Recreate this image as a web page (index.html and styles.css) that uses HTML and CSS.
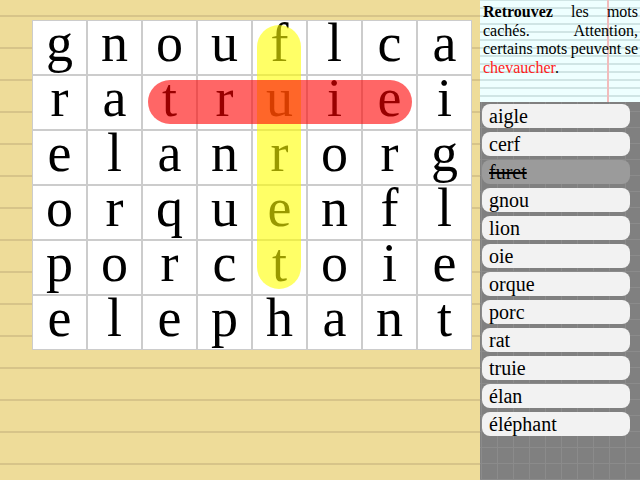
FILE: index.html
```html
<!DOCTYPE html>
<html lang="fr">
<head>
<meta charset="utf-8">
<title>Mots cachés</title>
<link rel="stylesheet" href="styles.css">
</head>
<body>
<main class="board">
  <div class="grid">
    <div class="cell">g</div><div class="cell">n</div><div class="cell">o</div><div class="cell">u</div><div class="cell">f</div><div class="cell">l</div><div class="cell">c</div><div class="cell">a</div>
    <div class="cell">r</div><div class="cell">a</div><div class="cell">t</div><div class="cell">r</div><div class="cell">u</div><div class="cell">i</div><div class="cell">e</div><div class="cell">i</div>
    <div class="cell">e</div><div class="cell">l</div><div class="cell">a</div><div class="cell">n</div><div class="cell">r</div><div class="cell">o</div><div class="cell">r</div><div class="cell">g</div>
    <div class="cell">o</div><div class="cell">r</div><div class="cell">q</div><div class="cell">u</div><div class="cell">e</div><div class="cell">n</div><div class="cell">f</div><div class="cell">l</div>
    <div class="cell">p</div><div class="cell">o</div><div class="cell">r</div><div class="cell">c</div><div class="cell">t</div><div class="cell">o</div><div class="cell">i</div><div class="cell">e</div>
    <div class="cell">e</div><div class="cell">l</div><div class="cell">e</div><div class="cell">p</div><div class="cell">h</div><div class="cell">a</div><div class="cell">n</div><div class="cell">t</div>
    <div class="mark mark-yellow"></div>
    <div class="mark mark-red"></div>
  </div>
</main>
<aside class="side">
  <p class="notes"><b>Retrouvez</b> les mots cachés. Attention, certains mots peuvent se <span class="hl">chevaucher</span>.</p>
  <ul class="words">
    <li class="word">aigle</li>
    <li class="word">cerf</li>
    <li class="word found">furet</li>
    <li class="word">gnou</li>
    <li class="word">lion</li>
    <li class="word">oie</li>
    <li class="word">orque</li>
    <li class="word">porc</li>
    <li class="word">rat</li>
    <li class="word">truie</li>
    <li class="word">élan</li>
    <li class="word">éléphant</li>
  </ul>
</aside>
</body>
</html>
```

FILE: styles.css
```css
html, body {
  margin: 0;
  padding: 0;
}
body {
  width: 640px;
  height: 480px;
  overflow: hidden;
  display: flex;
  font-family: "Liberation Serif", "Times New Roman", serif;
  color: #000;
}
.board {
  width: 480px;
  height: 480px;
  background-color: #eedc99;
  background-image: repeating-linear-gradient(to bottom, transparent 0 15px, #d7c489 15px 17px, transparent 17px 32px);
  padding: 20px 0 0 32px;
  box-sizing: border-box;
}
.grid {
  position: relative;
  display: grid;
  grid-template-columns: repeat(8, 55px);
  grid-auto-rows: 55px;
  width: 440px;
}
.cell {
  box-sizing: border-box;
  background: #fff;
  border: 1px solid #cccccc;
  font-size: 54px;
  line-height: 44px;
  text-align: center;
}
.mark {
  position: absolute;
  border-radius: 22px;
}
.mark-yellow {
  left: 225px;
  top: 5px;
  width: 44px;
  height: 264px;
  background: rgba(255, 255, 0, 0.6);
}
.mark-red {
  left: 116px;
  top: 60px;
  width: 264px;
  height: 44px;
  background: rgba(255, 0, 0, 0.6);
}
.side {
  width: 160px;
  height: 480px;
  display: flex;
  flex-direction: column;
}
.notes {
  margin: 0;
  height: 102px;
  box-sizing: border-box;
  padding: 3px 2px 0 3px;
  font-size: 16px;
  line-height: 18.5px;
  text-align: justify;
  word-spacing: -1px;
  background-color: #eeffff;
  background-image:
    linear-gradient(to right, transparent 127px, #f2bcbc 127px 129px, transparent 129px),
    repeating-linear-gradient(to bottom, #d0e5e5 0 1px, transparent 1px 7px, #d0e5e5 7px 8px);
}
.hl {
  color: #ff1a1a;
}
.words {
  flex: 1;
  margin: 0;
  list-style: none;
  padding: 2px 0 0 2px;
  display: flex;
  flex-direction: column;
  gap: 4px;
  background-color: #808080;
  background-image:
    repeating-linear-gradient(to right, transparent 0 1px, #8b8b8b 1px 2px, transparent 2px 16px),
    repeating-linear-gradient(to bottom, transparent 0 9px, #8b8b8b 9px 10px, transparent 10px 16px);
}
.word {
  width: 148px;
  height: 24px;
  box-sizing: border-box;
  padding-left: 7px;
  border-radius: 8px;
  background: #f2f2f2;
  font-size: 20px;
  line-height: 24px;
}
.word.found {
  background: #9b9b9b;
  text-decoration: line-through;
}
```
